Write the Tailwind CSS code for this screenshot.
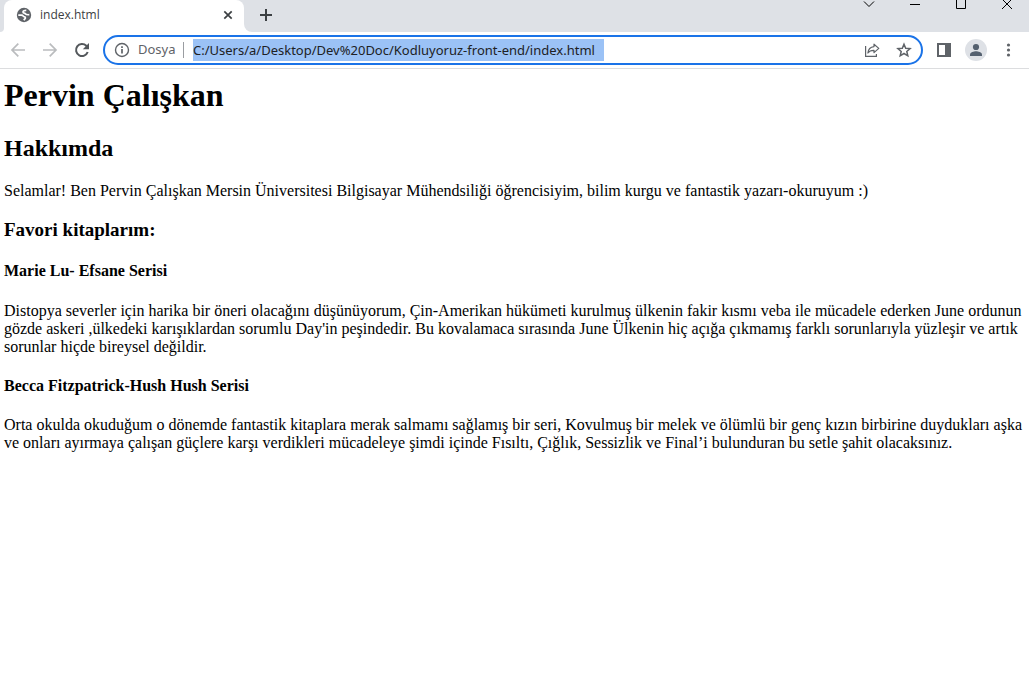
<!DOCTYPE html>
<html lang="tr">
<head>
<meta charset="utf-8">
<title>index.html</title>
<script src="https://cdn.jsdelivr.net/npm/@tailwindcss/browser@4"></script>
</head>
<body class="flex min-h-screen flex-col bg-white text-black">
<header class="border-b border-[#dcdddf] font-['Noto_Sans',sans-serif] text-[#5f6368]">
  <div class="flex h-8 items-start justify-between overflow-hidden bg-[#dee1e6]">
    <div class="flex">
      <div class="flex h-8 w-1 items-end bg-white"><span class="h-8 w-1 rounded-br-lg bg-[#dee1e6]"></span></div>
      <div class="flex h-8 w-60 items-center rounded-t-lg bg-white pr-2 pb-[2px] pl-3">
        <svg class="size-4" viewBox="0 0 16 16" aria-hidden="true"><circle cx="8" cy="8" r="7.2" fill="#5f6368"/><path d="M2.300 8.200H5.500C7.300 8.200 7 9.700 8.500 9.900c1.200.2 1.200 1.500.2 2L7.800 13.200M10.300 3.300C8.500 3.200 7 3.800 7 4.900c0 1.300 1.900 1 2.600 2.100.6.900 2.100.8 3.700.7" fill="none" stroke="#fff" stroke-width="1.700"/></svg>
        <span class="ml-2 flex-1 font-['Open_Sans',sans-serif] text-xs text-[#3c4043]">index.html</span>
        <button aria-label="Sekmeyi kapat" class="flex size-4 items-center justify-center"><svg class="size-4" viewBox="0 0 16 16" fill="none" stroke="#3c4043" stroke-width="1.700"><path d="M4.300 4.300l7.400 7.400M11.700 4.300l-7.400 7.400"/></svg></button>
      </div>
      <div class="h-8 w-2 bg-white"><span class="block h-8 w-2 rounded-bl-lg bg-[#dee1e6]"></span></div>
      <button aria-label="Yeni sekme" class="ml-1 flex h-[30px] w-5 items-center justify-center"><svg class="size-4" viewBox="0 0 16 16" fill="none" stroke="#3c4043" stroke-width="2"><path d="M2 8h12M8 2v12"/></svg></button>
    </div>
    <div class="flex text-black">
      <button aria-label="Sekme ara" class="flex h-4 w-[46px] justify-center"><svg class="h-4 w-4" viewBox="-1 0 16 16" fill="none" stroke="currentColor"><path d="M3 1.500l5 5 5-5"/></svg></button>
      <button aria-label="Simge durumuna küçült" class="flex h-4 w-[46px] justify-center"><svg class="h-4 w-4" viewBox="-1 0 16 16" fill="none" stroke="currentColor"><path d="M3 4.500h10"/></svg></button>
      <button aria-label="Ekranı kapla" class="flex h-4 w-[46px] justify-center"><svg class="h-4 w-4" viewBox="-1 0 16 16" fill="none" stroke="currentColor"><path d="M3.500-1.500h9v10h-9z"/></svg></button>
      <button aria-label="Kapat" class="flex h-4 w-[46px] justify-center"><svg class="h-4 w-4" viewBox="-1 0 16 16" fill="none" stroke="currentColor"><path d="M3-1l10 10M13-1L3 9"/></svg></button>
    </div>
  </div>
  <div class="flex h-9 items-center pr-[13px] pl-[10px]">
    <nav class="flex gap-4">
      <button aria-label="Geri"><svg class="size-4" viewBox="0 0 16 16" fill="none" stroke="#babcbe" stroke-width="1.700"><path d="M15 8H2M8.300 1.700L2 8l6.300 6.300"/></svg></button>
      <button aria-label="İleri"><svg class="size-4" viewBox="0 0 16 16" fill="none" stroke="#babcbe" stroke-width="1.700"><path d="M1 8h13M7.700 1.700L14 8l-6.300 6.300"/></svg></button>
      <button aria-label="Yenile"><svg class="size-4" viewBox="0 0 16 16"><path d="M13.700 10A6 6 0 1 1 12.300 3.800L14 5.400" fill="none" stroke="#54585c" stroke-width="2"/><path d="M15 1v6.200H8.800z" fill="#54585c"/></svg></button>
    </nav>
    <div class="ml-[13px] flex h-[30px] flex-1 items-center rounded-full border-2 border-[#1a73e8] pr-[9px] pl-[9px]">
      <svg class="size-4" viewBox="0 0 16 16" aria-hidden="true"><circle cx="8" cy="8" r="6.500" fill="none" stroke="#5f6368" stroke-width="1.400"/><path d="M8 7v4.500M8 4.200v1.700" stroke="#5f6368" stroke-width="1.700"/></svg>
      <label for="url" class="ml-2 w-[45px] text-[13px]">Dosya</label>
      <span class="h-4 w-px bg-[#9a9da1]"></span>
      <div class="ml-[9px] flex flex-1">
        <input id="url" type="text" value="C:/Users/a/Desktop/Dev%20Doc/Kodluyoruz-front-end/index.html" class="h-[22px] w-[411px] bg-[#9bc2f6] text-[13px] text-[#202124] outline-none">
      </div>
      <button aria-label="Paylaş" class="mr-4"><svg class="size-4" viewBox="0 0 16 16" fill="none" stroke="#5f6368" stroke-width="1.200"><path d="M1.600 4v10.400h10.800v-2.500"/><path d="M10 2.200L14.800 6.400 10 10.600V8.300C7.200 8.200 5.300 9 3.900 11c.3-3.300 2.300-6 6.100-6.400z" stroke-linejoin="round"/></svg></button>
      <button aria-label="Yer işareti ekle"><svg class="size-4" viewBox="0 0 16 16" fill="none" stroke="#5f6368" stroke-width="1.500"><path d="M8 2.200l1.700 4 4.400.4-3.300 2.900 1 4.300L8 11.500l-3.800 2.300 1-4.300-3.300-2.900 4.400-.4z"/></svg></button>
    </div>
    <div class="ml-[13px] flex items-center">
      <button aria-label="Yan panel"><svg class="size-4" viewBox="0 0 16 16"><path fill="#5f6368" fill-rule="evenodd" d="M1 1h14v14H1zM3 3v10h6V3z"/></svg></button>
      <button aria-label="Profil" class="ml-[13px]"><svg class="size-[22px]" viewBox="0 0 22 22"><circle cx="11" cy="11" r="11" fill="#dee1e6"/><circle cx="11" cy="8" r="3.100" fill="#54606f"/><path d="M5 17v-1.500c0-2 4-3.200 6-3.200s6 1.200 6 3.200V17z" fill="#54606f"/></svg></button>
      <button aria-label="Menü" class="ml-[13px]"><svg class="size-4" viewBox="0 0 16 16" fill="#5f6368"><circle cx="8.500" cy="3" r="1.600"/><circle cx="8.500" cy="8" r="1.600"/><circle cx="8.500" cy="13" r="1.600"/></svg></button>
    </div>
  </div>
</header>
<main class="flex-1 px-1 pt-2 font-['Liberation_Serif',serif] text-base leading-[18px]">
  <h1 class="mb-[21px] text-[32px] leading-[37px] font-bold">Pervin Çalışkan</h1>
  <h2 class="mb-5 text-2xl leading-[27px] font-bold">Hakkımda</h2>
  <p class="mb-[19px]">Selamlar! Ben Pervin Çalışkan Mersin Üniversitesi Bilgisayar Mühendsiliği öğrencisiyim, bilim kurgu ve fantastik yazarı-okuruyum :)</p>
  <h3 class="mb-[21px] text-[19px] leading-[22px] font-bold">Favori kitaplarım:</h3>
  <h4 class="mb-[22px] font-bold">Marie Lu- Efsane Serisi</h4>
  <p class="mb-[21px]">Distopya severler için harika bir öneri olacağını düşünüyorum, Çin-Amerikan hükümeti kurulmuş ülkenin fakir kısmı veba ile mücadele ederken June ordunun gözde askeri ,ülkedeki karışıklardan sorumlu Day'in peşindedir. Bu kovalamaca sırasında June Ülkenin hiç açığa çıkmamış farklı sorunlarıyla yüzleşir ve artık sorunlar hiçde bireysel değildir.</p>
  <h4 class="mb-[21px] font-bold">Becca Fitzpatrick-Hush Hush Serisi</h4>
  <p>Orta okulda okuduğum o dönemde fantastik kitaplara merak salmamı sağlamış bir seri, Kovulmuş bir melek ve ölümlü bir genç kızın birbirine duydukları aşka ve onları ayırmaya çalışan güçlere karşı verdikleri mücadeleye şimdi içinde Fısıltı, Çığlık, Sessizlik ve Final’i bulunduran bu setle şahit olacaksınız.</p>
</main>
</body>
</html>
